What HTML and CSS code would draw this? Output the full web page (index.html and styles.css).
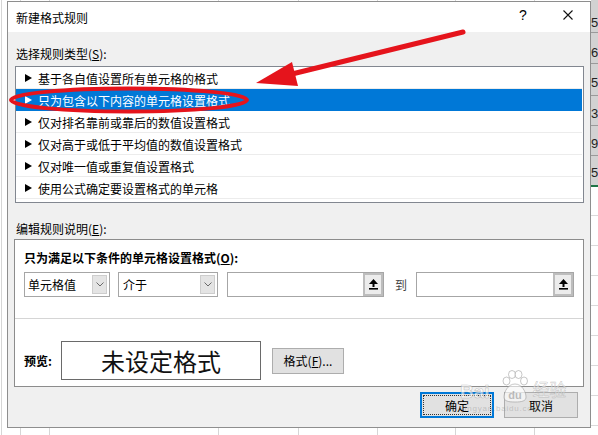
FILE: index.html
```html
<!DOCTYPE html>
<html lang="zh-CN">
<head>
<meta charset="utf-8">
<title>新建格式规则</title>
<link rel="stylesheet" href="styles.css">
</head>
<body>
<div class="screen">
  <svg class="sheet" width="598" height="435" viewBox="0 0 598 435">
    <g stroke="#d6d6d6" stroke-width="1">
      <line x1="1.5" y1="0" x2="1.5" y2="435"/>
      <line x1="20.5" y1="0" x2="20.5" y2="435"/>
      <line x1="49.5" y1="0" x2="49.5" y2="435"/>
      <line x1="218.5" y1="0" x2="218.5" y2="435"/>
      <line x1="298.5" y1="0" x2="298.5" y2="435"/>
      <line x1="377.5" y1="0" x2="377.5" y2="435"/>
      <line x1="455.5" y1="0" x2="455.5" y2="435"/>
      <line x1="534.5" y1="0" x2="534.5" y2="435"/>
    </g>
    <rect x="591" y="0" width="7" height="185" fill="#d2d2d2"/>
    <g stroke="#9a9a9a" stroke-width="1">
      <line x1="591" y1="32.5" x2="598" y2="32.5"/>
      <line x1="591" y1="63.5" x2="598" y2="63.5"/>
      <line x1="591" y1="95.5" x2="598" y2="95.5"/>
      <line x1="591" y1="125.5" x2="598" y2="125.5"/>
      <line x1="591" y1="155.5" x2="598" y2="155.5"/>
    </g>
    <g stroke="#dadada" stroke-width="1">
      <line x1="591" y1="215.5" x2="598" y2="215.5"/>
      <line x1="591" y1="245.5" x2="598" y2="245.5"/>
      <line x1="591" y1="275.5" x2="598" y2="275.5"/>
      <line x1="591" y1="305.5" x2="598" y2="305.5"/>
      <line x1="591" y1="335.5" x2="598" y2="335.5"/>
      <line x1="591" y1="365.5" x2="598" y2="365.5"/>
      <line x1="591" y1="395.5" x2="598" y2="395.5"/>
      <line x1="591" y1="425.5" x2="598" y2="425.5"/>
    </g>
    <rect x="591" y="185" width="7" height="2" fill="#217346"/>
    <g class="nums">
      <text x="591" y="27">51</text>
      <text x="591" y="57">67</text>
      <text x="591" y="87">58</text>
      <text x="591" y="118">38</text>
      <text x="591" y="148">91</text>
      <text x="591" y="177">51</text>
    </g>
  </svg>

  <div class="dialog">
    <div class="titlebar">
      <span class="title">新建格式规则</span>
      <span class="help">?</span>
      <svg class="close" width="10" height="10" viewBox="0 0 10 10">
        <path d="M0.5 0.5 L9.5 9.5 M9.5 0.5 L0.5 9.5" stroke="#111" stroke-width="1.1" fill="none"/>
      </svg>
    </div>
    <div class="body">
      <div class="label">选择规则类型(<u>S</u>):</div>
      <ul class="rules">
        <li><svg class="tri" width="7" height="8" viewBox="0 0 7 8"><polygon points="0,0 7,4 0,8" fill="currentColor"/></svg>基于各自值设置所有单元格的格式</li>
        <li class="sel"><svg class="tri" width="7" height="8" viewBox="0 0 7 8"><polygon points="0,0 7,4 0,8" fill="currentColor"/></svg>只为包含以下内容的单元格设置格式</li>
        <li><svg class="tri" width="7" height="8" viewBox="0 0 7 8"><polygon points="0,0 7,4 0,8" fill="currentColor"/></svg>仅对排名靠前或靠后的数值设置格式</li>
        <li><svg class="tri" width="7" height="8" viewBox="0 0 7 8"><polygon points="0,0 7,4 0,8" fill="currentColor"/></svg>仅对高于或低于平均值的数值设置格式</li>
        <li><svg class="tri" width="7" height="8" viewBox="0 0 7 8"><polygon points="0,0 7,4 0,8" fill="currentColor"/></svg>仅对唯一值或重复值设置格式</li>
        <li><svg class="tri" width="7" height="8" viewBox="0 0 7 8"><polygon points="0,0 7,4 0,8" fill="currentColor"/></svg>使用公式确定要设置格式的单元格</li>
      </ul>

      <div class="label label2">编辑规则说明(<u>E</u>):</div>
      <div class="editbox">
        <div class="cond">
          <div class="heading">只为满足以下条件的单元格设置格式(<u>O</u>):</div>
          <div class="controls">
            <div class="combo c1">
              <span class="ctext">单元格值</span>
              <span class="drop"><svg width="8" height="5" viewBox="0 0 8 5"><polyline points="0.5,0.5 4,4 7.5,0.5" fill="none" stroke="#6a6a6a" stroke-width="1"/></svg></span>
            </div>
            <div class="combo c2">
              <span class="ctext">介于</span>
              <span class="drop"><svg width="8" height="5" viewBox="0 0 8 5"><polyline points="0.5,0.5 4,4 7.5,0.5" fill="none" stroke="#6a6a6a" stroke-width="1"/></svg></span>
            </div>
            <div class="tbox t1">
              <span class="ref"><svg width="9" height="11" viewBox="0 0 9 11"><polygon points="4.5,0 9,5 0,5" fill="#000"/><rect x="3.5" y="4.5" width="2" height="3.5" fill="#000"/><rect x="0" y="9" width="9" height="1.6" fill="#000"/></svg></span>
            </div>
            <span class="to">到</span>
            <div class="tbox t2">
              <span class="ref"><svg width="9" height="11" viewBox="0 0 9 11"><polygon points="4.5,0 9,5 0,5" fill="#000"/><rect x="3.5" y="4.5" width="2" height="3.5" fill="#000"/><rect x="0" y="9" width="9" height="1.6" fill="#000"/></svg></span>
            </div>
          </div>
        </div>
        <div class="prow">
          <span class="pvlabel">预览:</span>
          <div class="preview">未设定格式</div>
          <div class="btn fmt">格式(<u>F</u>)...</div>
        </div>
      </div>

      <div class="footer">
        <div class="btn ok"><span class="focus">确定</span></div>
        <div class="btn cancel">取消</div>
      </div>
    </div>
  </div>

  <svg class="marks" width="598" height="435" viewBox="0 0 598 435">
    <ellipse cx="129" cy="100" rx="118" ry="11.5" fill="none" stroke="#e5141c" stroke-width="4"/>
    <line x1="463" y1="32" x2="292" y2="74" stroke="#e5141c" stroke-width="5" stroke-linecap="round"/>
    <polygon points="256,83 292,62 298,86" fill="#e5141c"/>
  </svg>

  <div class="watermark">
    <div class="wm-row">
      <span class="wm-bai">Bai</span>
      <svg class="wm-paw" width="26" height="33" viewBox="0 0 26 33">
        <g fill="rgba(255,255,255,0.6)" stroke="rgba(130,130,130,0.45)" stroke-width="1">
          <ellipse cx="4.5" cy="11" rx="3.5" ry="4"/>
          <ellipse cx="10" cy="4.5" rx="3.5" ry="4"/>
          <ellipse cx="16.5" cy="4.5" rx="3.5" ry="4"/>
          <ellipse cx="22" cy="11" rx="3.5" ry="4"/>
          <path d="M13 14 C6 14 2 22 2 27 C2 31 6 32 13 32 C20 32 24 31 24 27 C24 22 20 14 13 14 Z"/>
        </g>
        <text x="13" y="29" text-anchor="middle" class="wm-du">du</text>
      </svg>
      <span class="wm-jy">经验</span>
    </div>
    <div class="wm-url">jingyan.baidu.com</div>
  </div>
</div>
</body>
</html>
```

FILE: styles.css
```css
* {
  box-sizing: border-box;
  margin: 0;
  padding: 0;
}

body {
  margin: 0;
  background: #fff;
  font-family: "Noto Sans CJK SC", "Noto Sans", sans-serif;
  font-size: 12px;
  color: #000;
}

.screen {
  position: relative;
  width: 598px;
  height: 435px;
  overflow: hidden;
  background: #fff;
}

.sheet {
  position: absolute;
  left: 0;
  top: 0;
}

.nums text {
  font-family: "Liberation Sans", sans-serif;
  font-size: 13px;
  fill: #222;
}

/* dialog window */
.dialog {
  position: absolute;
  left: 7px;
  top: 1px;
  width: 584px;
  height: 427px;
  border: 1px solid #8e8e8e;
  background: #f0f0f0;
  display: flex;
  flex-direction: column;
}

.titlebar {
  flex: none;
  height: 30px;
  background: #fff;
  display: flex;
  align-items: center;
  padding-left: 8px;
}

.title {
  flex: 1;
  line-height: 17px;
}

.help {
  width: 10px;
  text-align: center;
  font-family: "Liberation Sans", sans-serif;
  font-size: 14px;
  line-height: 14px;
  margin-right: 35px;
  margin-bottom: 4px;
}

.close {
  flex: none;
  margin-right: 17px;
  margin-bottom: 4px;
}

.body {
  flex: 1;
  display: flex;
  flex-direction: column;
  padding: 0 7px;
}

.label {
  line-height: 17px;
  margin: 13px 0 0 1px;
}

.label2 {
  margin-top: 17px;
}

/* rule list */
.rules {
  list-style: none;
  margin-top: 4px;
  width: 569px;
  height: 137px;
  border: 1px solid #828790;
  background: #fff;
  padding: 0 1px 3px 0;
}

.rules li {
  height: 22px;
  display: flex;
  align-items: center;
  padding: 1px 0 0 9px;
  border-bottom: 1px solid #ececec;
  line-height: 17px;
  white-space: nowrap;
}

.rules li.sel {
  background: #0078d7;
  color: #fff;
  border-bottom-color: #0078d7;
}

.tri {
  flex: none;
  margin-right: 6px;
}

/* edit area */
.editbox {
  margin: 2px 0 0 -1px;
  width: 570px;
  height: 148px;
  border: 1px solid #8c8c8c;
  background: #fff;
  display: flex;
  flex-direction: column;
}

.cond {
  flex: none;
  height: 79px;
  border-bottom: 1px solid #d5d5d5;
  padding: 9px 0 0 9px;
}

.heading {
  font-weight: bold;
  line-height: 17px;
}

.controls {
  display: flex;
  align-items: center;
  height: 25px;
  margin-top: 6px;
}

.combo {
  height: 25px;
  border: 1px solid #a6a6a6;
  background: #fff;
  display: flex;
  align-items: center;
  padding: 0 2px 0 3px;
}

.c1 {
  width: 86px;
}

.c2 {
  width: 100px;
  margin-left: 8px;
  padding-left: 4px;
}

.ctext {
  flex: 1;
  line-height: 17px;
}

.drop {
  flex: none;
  width: 15px;
  height: 19px;
  background: #e4e4e4;
  border: 1px solid #cdcdcd;
  display: flex;
  align-items: center;
  justify-content: center;
}

.tbox {
  height: 25px;
  border: 1px solid #a6a6a6;
  background: #fff;
  display: flex;
  justify-content: flex-end;
}

.t1 {
  width: 157px;
  margin-left: 9px;
}

.t2 {
  width: 158px;
  margin-left: 9px;
}

.ref {
  width: 20px;
  height: 100%;
  background: #ececec;
  border: 2px solid #bdbdbd;
  display: flex;
  align-items: center;
  justify-content: center;
}

.to {
  margin-left: 11px;
  width: 12px;
  color: #444;
  line-height: 17px;
}

.prow {
  display: flex;
  align-items: center;
  padding: 22px 0 0 9px;
}

.pvlabel {
  width: 37px;
  font-weight: bold;
  line-height: 17px;
}

.preview {
  width: 200px;
  height: 39px;
  border: 1px solid #6a6a6a;
  display: flex;
  align-items: center;
  justify-content: center;
  font-size: 24px;
  color: #111;
}

.btn {
  background: #e1e1e1;
  border: 1px solid #adadad;
  display: flex;
  align-items: center;
  justify-content: center;
  line-height: 17px;
}

.fmt {
  width: 72px;
  height: 26px;
  margin-left: 11px;
}

.footer {
  display: flex;
  justify-content: flex-end;
  gap: 10px;
  margin-top: 5px;
  padding-right: 5px;
}

.ok,
.cancel {
  width: 74px;
  height: 26px;
}

.ok {
  border: 2px solid #0078d7;
  padding: 1px;
}

.focus {
  width: 100%;
  height: 100%;
  border: 1px dotted #333;
  display: flex;
  align-items: center;
  justify-content: center;
}

/* annotations */
.marks {
  position: absolute;
  left: 0;
  top: 0;
  pointer-events: none;
}

.watermark {
  position: absolute;
  left: 460px;
  top: 370px;
  display: flex;
  flex-direction: column;
  align-items: flex-start;
  pointer-events: none;
}

.wm-row {
  display: flex;
  align-items: flex-end;
}

.wm-bai {
  font-family: "Liberation Sans", sans-serif;
  font-weight: bold;
  font-size: 19px;
  line-height: 20px;
  color: rgba(255, 255, 255, 0.6);
  -webkit-text-stroke: 0.6px rgba(130, 130, 130, 0.45);
  margin-right: 12px;
  margin-bottom: 1px;
}

.wm-paw {
  flex: none;
}

.wm-du {
  font-family: "Liberation Sans", sans-serif;
  font-weight: bold;
  font-size: 11px;
  fill: rgba(130, 130, 130, 0.5);
}

.wm-jy {
  font-size: 17px;
  line-height: 20px;
  color: rgba(255, 255, 255, 0.6);
  -webkit-text-stroke: 0.5px rgba(130, 130, 130, 0.45);
  margin-left: 5px;
  margin-bottom: 4px;
}

.wm-url {
  font-family: "Liberation Sans", sans-serif;
  font-size: 8px;
  line-height: 9px;
  letter-spacing: 0.8px;
  color: rgba(150, 150, 150, 0.45);
  margin: 1px 0 0 2px;
}
```
